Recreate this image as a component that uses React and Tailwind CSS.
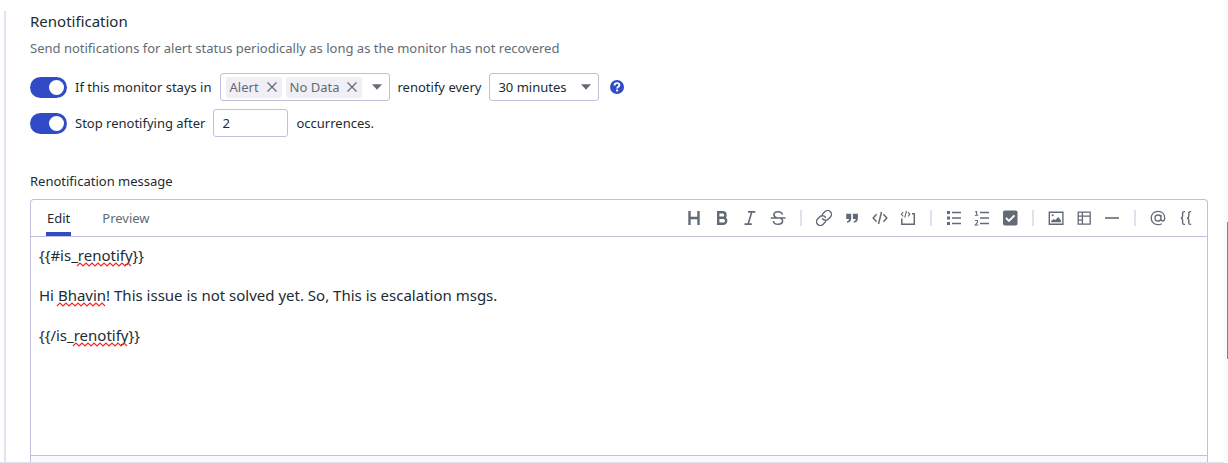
import { useState } from "react";

const stroke = { fill: "none", stroke: "currentColor", strokeWidth: 1.4 };

function Icon({ children }) {
  return (
    <svg viewBox="0 0 16 16" className="size-4" aria-hidden="true">
      {children}
    </svg>
  );
}

const toolGroups = [
  [
    { label: "Heading", icon: <path {...stroke} strokeWidth="2.4" d="M3.5 1v14M12.5 1v14M3.5 8h9" /> },
    {
      label: "Bold",
      icon: <path {...stroke} strokeWidth="2.4" d="M4.2 2.2h4.6a2.7 2.7 0 0 1 0 5.4H4.2M4.2 7.8h5a2.9 2.9 0 0 1 0 6H4.2zM4.2 1v14" />,
    },
    { label: "Italic", icon: <path {...stroke} strokeWidth="1.6" d="M6 1.9h7.3M2.5 14.1h7.3M9.8 2L6.1 14" /> },
    {
      label: "Strikethrough",
      icon: (
        <path
          {...stroke}
          strokeWidth="1.6"
          d="M.7 8h14.8M12.3 4.6C12 2.8 10.5 1.7 8.1 1.7c-2.5 0-4.2 1.2-4.2 3.1 0 1.6 1.1 2.5 3.2 3.2M3.4 11c.2 2.1 1.9 3.3 4.6 3.3 2.8 0 4.6-1.2 4.6-3.2 0-1.4-.8-2.3-2-3"
        />
      ),
    },
  ],
  [
    {
      label: "Link",
      icon: (
        <g transform="translate(-1 -1) scale(0.75)" {...stroke} strokeWidth="1.9" strokeLinecap="round">
          <path d="M10 13a5 5 0 0 0 7.54.54l3-3a5 5 0 0 0-7.07-7.07l-3.6 3.6" />
          <path d="M14 11a5 5 0 0 0-7.54-.54l-3 3a5 5 0 0 0 7.07 7.07l3.6-3.6" />
        </g>
      ),
    },
    {
      label: "Quote",
      icon: <path fill="currentColor" d="M2.2 3.8h5v4.4c0 2.5-1.5 4.3-4.2 4.6v-1.5c1.3-.3 2-1 2.1-2.3H2.2zM8.9 3.8h5v4.4c0 2.5-1.5 4.3-4.2 4.6v-1.5c1.3-.3 2-1 2.1-2.3H8.9z" />,
    },
    { label: "Code", icon: <path {...stroke} strokeWidth="1.5" d="M4.6 4.2L1.2 8l3.4 3.8M11.4 4.2L14.8 8l-3.4 3.8M9.5 2L6.5 14" /> },
    {
      label: "Code block",
      icon: (
        <>
          <path {...stroke} strokeWidth="1.5" d="M1.8 8.5v5.8h12.5V3.7H12" />
          <path {...stroke} strokeWidth="1.1" d="M3.2 2.2L1.3 4.3l1.9 2.1M8 2.2l1.9 2.1L8 6.4M6.5 .8L4.7 7.6" />
        </>
      ),
    },
  ],
  [
    {
      label: "Bulleted list",
      icon: <path fill="currentColor" d="M1 1h3v3H1zM1 6.5h3v3H1zM1 12h3v3H1zM6 1.8h9v1.4H6zM6 7.3h9v1.4H6zM6 12.8h9v1.4H6z" />,
    },
    {
      label: "Numbered list",
      icon: (
        <>
          <path fill="currentColor" d="M6 1.8h9v1.4H6zM6 7.3h9v1.4H6zM6 12.8h9v1.4H6z" />
          <path {...stroke} strokeWidth="1.1" d="M1.2 1.6h1.4v3.6M.8 5.2h3.5M1 10.5h2.5v1.8L1.2 15h3.1" />
        </>
      ),
    },
    {
      label: "Checklist",
      icon: (
        <>
          <rect x="1" y="0.5" width="14.5" height="15" rx="1.8" fill="currentColor" />
          <path d="M4 8l3 3 5.5-5.6" fill="none" stroke="white" strokeWidth="1.9" />
        </>
      ),
    },
  ],
  [
    {
      label: "Image",
      icon: (
        <>
          <path {...stroke} d="M1.3 2.2h13.6v12H1.3z" />
          <circle cx="4.7" cy="5.2" r="1" fill="currentColor" />
          <path fill="currentColor" d="M3.2 12.3v-1.4l2.3-2 1.7 1.2 3.2-3 2.6 3.4v1.8z" />
        </>
      ),
    },
    { label: "Table", icon: <path {...stroke} strokeWidth="1.3" d="M2.2 2.2h12v12h-12zM2.2 6.2h12M6.4 2.2v12M2.2 10.2h4.2" /> },
    { label: "Divider", icon: <path fill="currentColor" d="M1 7.2h14v1.6H1z" /> },
  ],
  [
    {
      label: "Mention",
      icon: (
        <path
          {...stroke}
          strokeWidth="1.3"
          d="M11 8a3 3 0 1 1-6 0 3 3 0 0 1 6 0M11 4.8v4.4c0 1 .6 1.8 1.7 1.8s2-1 2-3c0-4-2.8-6.7-6.7-6.7S1.2 4 1.2 8s2.9 6.7 6.8 6.7c1.5 0 2.7-.3 3.8-1"
        />
      ),
    },
    {
      label: "Template variable",
      icon: (
        <path
          {...stroke}
          d="M7 1.6H6C4.9 1.6 4.6 2.2 4.6 3v2.9c0 1.2-.5 1.9-1.7 2.1 1.2.2 1.7.9 1.7 2.1V13c0 .8.3 1.4 1.4 1.4h1M13.2 1.6h-1c-1.1 0-1.4.6-1.4 1.4v2.9c0 1.2-.5 1.9-1.7 2.1 1.2.2 1.7.9 1.7 2.1V13c0 .8.3 1.4 1.4 1.4h1"
        />
      ),
    },
  ],
];

function Toggle({ id }) {
  const [on, setOn] = useState(true);
  return (
    <input
      id={id}
      type="checkbox"
      role="switch"
      checked={on}
      onChange={() => setOn(!on)}
      className="h-[21px] w-[37px] shrink-0 cursor-pointer appearance-none rounded-full bg-gray-300 p-[3px] before:block before:size-[15px] before:rounded-full before:bg-white checked:bg-[#314bc6] checked:before:ml-4"
    />
  );
}

function Caret() {
  return (
    <svg viewBox="0 0 10 6" className="h-[6px] w-[10px] text-[#626b75]" aria-hidden="true">
      <path d="M0 .3h10L5 5.8z" fill="currentColor" />
    </svg>
  );
}

function Tag({ name }) {
  return (
    <span className="flex h-[21px] items-center gap-2 rounded-[3px] bg-[#efeff5] px-1 text-[#626b75]">
      {name}
      <button type="button" aria-label={`Remove ${name}`}>
        <svg viewBox="0 0 10 10" className="mr-px size-[10px]" aria-hidden="true">
          <path d="M.5.5l9 9M9.5.5l-9 9" fill="none" stroke="currentColor" strokeWidth="1.2" />
        </svg>
      </button>
    </span>
  );
}

const misspellings = [
  { x: 46, y: 29, width: 56 },
  { x: 26, y: 69, width: 49 },
  { x: 42, y: 109, width: 56 },
];

function zigzag({ x, y, width }) {
  let d = `M${x} ${y}`;
  for (let i = 1; i * 3 <= width; i++) d += ` L${x + i * 3} ${y + (i % 2 ? -3 : 0)}`;
  return d;
}

export default function App() {
  const [message, setMessage] = useState(
    "{{#is_renotify}}\n\nHi Bhavin! This issue is not solved yet. So, This is escalation msgs.\n\n{{/is_renotify}}"
  );
  const [initial] = useState(message);

  return (
    <div className="flex h-screen bg-white font-['Noto_Sans',sans-serif] text-[13px] leading-5 text-[#1c2b34]">
      <main className="flex min-w-0 flex-1 flex-col border-b border-[#e2e1ee] pt-[11px] pl-1">
        <section className="flex min-h-0 flex-1 flex-col border-l-2 border-[#e4e2f0] pr-4 pl-6">
          <h2 className="text-[15px] leading-5">Renotification</h2>
          <p className="mt-[7px] text-[#626b75]">
            Send notifications for alert status periodically as long as the monitor has not recovered
          </p>

          <div className="mt-[15px] flex h-7 items-center gap-2">
            <Toggle id="stays-in" />
            <label htmlFor="stays-in">If this monitor stays in</label>
            <div className="flex h-7 w-[170px] items-center gap-1 rounded-[3px] border border-[#c2bfdd] pr-[7px] pl-[5px]">
              <Tag name="Alert" />
              <Tag name="No Data" />
              <button type="button" aria-label="Choose statuses" className="ml-auto">
                <Caret />
              </button>
            </div>
            <label htmlFor="interval">renotify every</label>
            <div className="grid h-7 w-[110px] items-center rounded-[3px] border border-[#c2bfdd]">
              <select
                id="interval"
                defaultValue="30"
                className="col-start-1 row-start-1 h-full w-full appearance-none bg-transparent pl-2"
              >
                <option value="30">30 minutes</option>
              </select>
              <span className="pointer-events-none col-start-1 row-start-1 mr-[7px] justify-self-end">
                <Caret />
              </span>
            </div>
            <button type="button" aria-label="Help" className="ml-[3px]">
              <svg viewBox="0 0 14 14" className="size-[14px]" aria-hidden="true">
                <circle cx="7" cy="7" r="7" fill="#314bc6" />
                <path d="M4.6 5.4C4.6 3.9 5.6 3.1 7 3.1s2.4.8 2.4 2.1c0 1.6-2.3 1.7-2.3 3.3" fill="none" stroke="white" strokeWidth="1.9" />
                <path d="M6.1 9.5h2v1.9h-2z" fill="white" />
              </svg>
            </button>
          </div>

          <div className="mt-2 flex h-7 items-center gap-2">
            <Toggle id="stop-after" />
            <label htmlFor="stop-after">Stop renotifying after</label>
            <input
              type="text"
              inputMode="numeric"
              aria-label="Number of occurrences"
              defaultValue="2"
              className="h-7 w-[75px] rounded-[3px] border border-[#c2bfdd] px-2"
            />
            <span>occurrences.</span>
          </div>

          <label htmlFor="message" className="mt-[34px] self-start">
            Renotification message
          </label>

          <div className="mt-2 flex min-h-0 flex-1 flex-col rounded-t-[4px] border border-b-0 border-[#c2bfdd]">
            <div className="flex h-[37px] items-stretch justify-between border-b border-[#c2bfdd] pr-[7px] pl-[15px]">
              <div role="tablist" className="flex gap-[30px]">
                <button type="button" role="tab" aria-selected="true" className="border-b-4 border-[#314bc6] px-px pt-1">
                  Edit
                </button>
                <button type="button" role="tab" aria-selected="false" className="border-b-4 border-transparent px-px pt-1 text-[#626b75]">
                  Preview
                </button>
              </div>
              <div role="toolbar" aria-label="Formatting" className="flex items-center text-[#626b75]">
                {toolGroups.map((group, i) => (
                  <div key={group[0].label} className="flex items-center">
                    {i > 0 && <span className="mx-2 h-4 w-[2px] bg-[#e2e1ee]" />}
                    {group.map((tool) => (
                      <button key={tool.label} type="button" aria-label={tool.label} className="grid size-7 place-items-center">
                        <Icon>{tool.icon}</Icon>
                      </button>
                    ))}
                  </div>
                ))}
              </div>
            </div>
            <div className="relative flex min-h-0 flex-1">
              <textarea
                id="message"
                spellCheck="false"
                value={message}
                onChange={(e) => setMessage(e.target.value)}
                className="w-full resize-none px-2 pt-2 text-[15px] leading-5 outline-none"
              />
              {message === initial && (
                <svg className="pointer-events-none absolute inset-0 size-full" aria-hidden="true">
                  {misspellings.map((m) => (
                    <path key={m.y} d={zigzag(m)} fill="none" stroke="#f22" strokeWidth="1.2" />
                  ))}
                </svg>
              )}
            </div>
            <div className="h-[7px] shrink-0 border-t border-[#c2bfdd] bg-[#f9fafc]" />
          </div>
        </section>
      </main>
      <div className="flex w-1 justify-end bg-[#fafafa] pt-[222px]">
        <div className="h-[137px] w-px bg-[#808080]" />
      </div>
    </div>
  );
}
